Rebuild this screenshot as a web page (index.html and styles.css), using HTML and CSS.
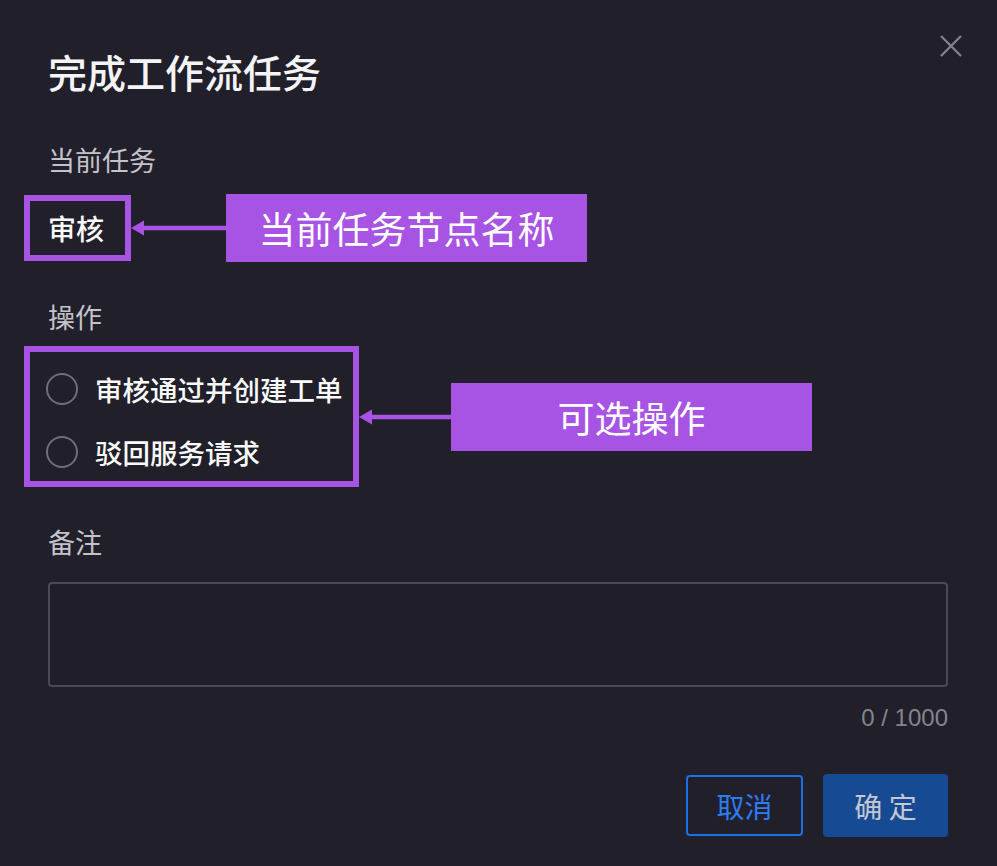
FILE: index.html
```html
<!DOCTYPE html>
<html lang="zh-CN">
<head>
<meta charset="utf-8">
<title>完成工作流任务</title>
<link rel="stylesheet" href="styles.css">
</head>
<body>
<div class="dialog">
  <div class="header">
    <h1 class="title">完成工作流任务</h1>
    <button class="close" aria-label="关闭">
      <svg width="22" height="22" viewBox="0 0 22 22"><path d="M1 1L21 21M21 1L1 21" stroke="#85848c" stroke-width="2.2" fill="none"/></svg>
    </button>
  </div>

  <div class="label label-first">当前任务</div>
  <div class="annot-row row-task">
    <div class="mark mark-task"><span class="task-name">审核</span></div>
    <svg class="arrow arrow-1" width="95" height="16" viewBox="0 0 95 16"><path d="M12 8H95" stroke="#a753e4" stroke-width="4.5"/><path d="M0 8L13 0.5V15.5Z" fill="#a753e4"/></svg>
    <div class="tag">当前任务节点名称</div>
  </div>

  <div class="label">操作</div>
  <div class="annot-row row-ops">
    <div class="mark mark-ops">
      <label class="radio"><span class="circle"></span><span class="radio-text">审核通过并创建工单</span></label>
      <label class="radio"><span class="circle"></span><span class="radio-text">驳回服务请求</span></label>
    </div>
    <svg class="arrow arrow-2" width="92" height="16" viewBox="0 0 92 16"><path d="M12 8H92" stroke="#a753e4" stroke-width="4.5"/><path d="M0 8L13 0.5V15.5Z" fill="#a753e4"/></svg>
    <div class="tag">可选操作</div>
  </div>

  <div class="label label-note">备注</div>
  <div class="textarea"></div>
  <div class="counter">0 / 1000</div>

  <div class="footer">
    <button class="btn btn-cancel">取消</button>
    <button class="btn btn-ok">确 定</button>
  </div>
</div>
</body>
</html>
```

FILE: styles.css
```css
html, body {
  margin: 0;
  padding: 0;
  background: #211f2a;
}
body {
  font-family: "Noto Sans CJK SC", "Liberation Sans", sans-serif;
  color: #f2f2f4;
}
.dialog {
  padding: 35px 49px 0 48px;
  width: 997px;
  height: 866px;
  box-sizing: border-box;
}
.header {
  display: flex;
  justify-content: space-between;
  align-items: flex-start;
}
.title {
  margin: 10px 0 0 0;
  font-size: 39px;
  line-height: 53px;
  font-weight: 500;
  color: #f4f4f6;
}
.close {
  background: none;
  border: 0;
  padding: 0;
  margin-right: -14px;
  width: 22px;
  height: 22px;
  display: block;
}
.close svg { display: block; }

.label {
  font-size: 27px;
  line-height: 36px;
  color: #c4c3ca;
  margin-top: 37px;
}
.label-first { margin-top: 44px; }

.annot-row {
  display: flex;
  align-items: center;
  margin-left: -24px;
}
.row-task { margin-top: 16px; }
.row-ops { margin-top: 11px; }

.mark {
  border: 6px solid #a753e4;
  box-sizing: border-box;
}
.mark-task {
  width: 107px;
  height: 66px;
  padding-left: 18px;
  display: flex;
  align-items: center;
}
.task-name {
  font-size: 28px;
  line-height: 36px;
  color: #fafafa;
  font-weight: 500;
}
.mark-ops {
  width: 335px;
  height: 141px;
  padding: 17px 0 0 16px;
  display: flex;
  flex-direction: column;
  gap: 23px;
}
.radio {
  display: flex;
  align-items: center;
  height: 40px;
}
.circle {
  width: 32px;
  height: 32px;
  box-sizing: border-box;
  border: 2px solid #6f6e77;
  border-radius: 50%;
  margin-right: 17px;
  flex: none;
}
.radio-text {
  font-size: 27.5px;
  line-height: 36px;
  color: #fafafa;
  font-weight: 500;
  white-space: nowrap;
}
.arrow { display: block; flex: none; }
.tag {
  width: 361px;
  height: 68px;
  background: #a753e4;
  color: #ffffff;
  font-size: 37px;
  line-height: 68px;
  text-align: center;
  flex: none;
}

.label-note { margin-top: 37px; }
.textarea {
  margin-top: 22px;
  height: 105px;
  box-sizing: border-box;
  border: 2px solid #4a4955;
  border-radius: 4px;
  background: #201e29;
}
.counter {
  margin-top: 15px;
  text-align: right;
  font-family: "Liberation Sans", sans-serif;
  font-size: 24px;
  line-height: 32px;
  color: #85848c;
}
.footer {
  margin-top: 40px;
  display: flex;
  justify-content: flex-end;
  align-items: center;
  gap: 20px;
}
.btn {
  font-family: "Noto Sans CJK SC", sans-serif;
  font-size: 28px;
  border-radius: 4px;
  padding: 0;
  cursor: pointer;
}
.btn-cancel {
  width: 117px;
  height: 61px;
  background: transparent;
  border: 2px solid #1b6fe8;
  color: #2b7cf7;
}
.btn-ok {
  width: 125px;
  height: 63px;
  background: #164a93;
  border: 0;
  color: #c3c8d2;
}
```
